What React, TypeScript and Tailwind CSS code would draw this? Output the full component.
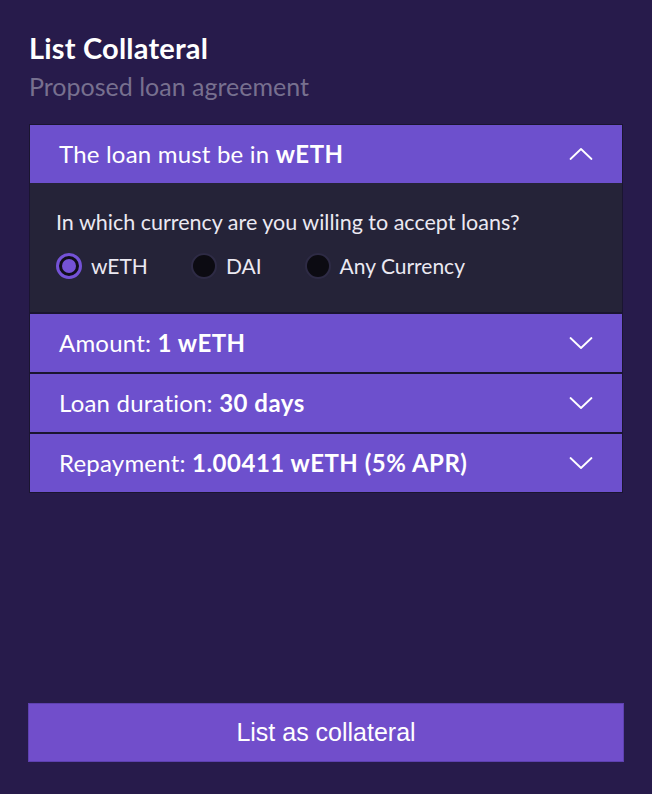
import React, { useState } from "react";

const Chevron = ({ up }: { up?: boolean }) => (
  <svg width="24" height="14" viewBox="0 0 24 14" fill="none" className="text-white">
    <path
      d={up ? "M1.5 12 L12 2 L22.5 12" : "M1.5 2 L12 12 L22.5 2"}
      stroke="currentColor"
      strokeWidth="1.8"
      strokeLinecap="round"
      strokeLinejoin="round"
    />
  </svg>
);

function Radio({ checked, label, onClick }: { checked: boolean; label: string; onClick: () => void }) {
  return (
    <button onClick={onClick} className="flex items-center gap-[9px]">
      {checked ? (
        <span className="w-[26px] h-[26px] rounded-full border-[3px] border-[#7452d6] bg-[#100e1a] flex items-center justify-center">
          <span className="w-[14px] h-[14px] rounded-full bg-[#7452d6]" />
        </span>
      ) : (
        <span className="w-[26px] h-[26px] rounded-full border-[2px] border-[#2e2b45] bg-[#0c0b12]" />
      )}
      <span className="text-[21px] text-[#ebe9f2]">{label}</span>
    </button>
  );
}

function Row({ label, value, open, onClick }: { label: string; value: string; open?: boolean; onClick: () => void }) {
  return (
    <button
      onClick={onClick}
      className="w-full h-[58px] bg-[#6d50cd] flex items-center justify-between pl-[29px] pr-[29px] text-white text-[24px] tracking-[0.2px]"
    >
      <span>
        {label} <span className="font-bold tracking-[0.5px]">{value}</span>
      </span>
      <Chevron up={open} />
    </button>
  );
}

export default function App() {
  const [currency, setCurrency] = useState("wETH");
  const [open, setOpen] = useState(0);

  return (
    <div
      className="w-[652px] h-[794px] bg-[#271b4b] flex flex-col px-[29px] pt-[31px] pb-[32px]"
      style={{ fontFamily: "Lato, 'Open Sans', sans-serif" }}
    >
      <h1 className="text-[29px] font-bold text-white leading-[34px] tracking-[0.2px]">List Collateral</h1>
      <p className="text-[25px] text-[#77708f] mt-[6px] leading-[30px]">Proposed loan agreement</p>

      <div className="mt-[23px] border border-[#1a1530] bg-[#1a1530] flex flex-col gap-[2px]">
        <div>
          <Row label="The loan must be in" value={currency} open={open === 0} onClick={() => setOpen(open === 0 ? -1 : 0)} />
          {open === 0 && (
            <div className="bg-[#252338] h-[129px] px-[26px] pt-[25px]">
              <p className="text-[21.5px] text-[#ebe9f2] leading-[28px]">In which currency are you willing to accept loans?</p>
              <div className="flex items-center gap-[43px] mt-[14px]">
                <Radio checked={currency === "wETH"} label="wETH" onClick={() => setCurrency("wETH")} />
                <Radio checked={currency === "DAI"} label="DAI" onClick={() => setCurrency("DAI")} />
                <Radio checked={currency === "Any Currency"} label="Any Currency" onClick={() => setCurrency("Any Currency")} />
              </div>
            </div>
          )}
        </div>
        <Row label="Amount:" value="1 wETH" open={open === 1} onClick={() => setOpen(open === 1 ? -1 : 1)} />
        <Row label="Loan duration:" value="30 days" open={open === 2} onClick={() => setOpen(open === 2 ? -1 : 2)} />
        <Row label="Repayment:" value="1.00411 wETH (5% APR)" open={open === 3} onClick={() => setOpen(open === 3 ? -1 : 3)} />
      </div>

      <div className="flex-1" />

      <button
        className="h-[59px] -mx-[1px] bg-[#714ecb] border border-[#5e41b0] text-white text-[25px]"
        style={{ fontFamily: "'Liberation Sans', Arial, sans-serif" }}
      >
        List as collateral
      </button>
    </div>
  );
}
